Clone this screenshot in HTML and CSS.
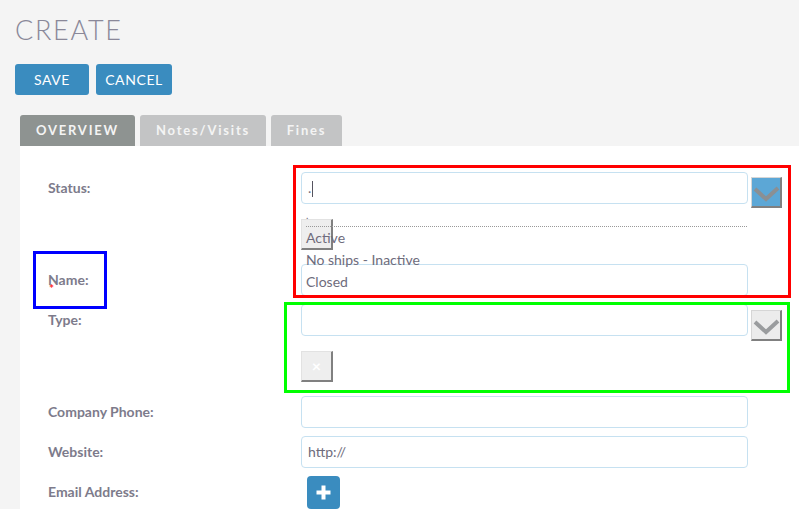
FILE: index.html
```html
<!DOCTYPE html>
<html>
<head>
<meta charset="utf-8">
<link rel="stylesheet" href="styles.css">
</head>
<body>
<div class="page">
  <h1 class="title">CREATE</h1>
  <div class="actions">
    <button class="btn btn-save">SAVE</button>
    <button class="btn btn-cancel">CANCEL</button>
  </div>
  <div class="tabs">
    <span class="tab tab-active">OVERVIEW</span>
    <span class="tab tab-notes">Notes/Visits</span>
    <span class="tab tab-fines">Fines</span>
  </div>
  <div class="panel">
    <div class="form">
      <div class="row">
        <div class="label">Status:</div>
        <div class="field">
          <div class="line">
            <div class="input">.<span class="caret"></span></div>
            <span class="chev chev-blue"><svg viewBox="0 0 28 28" width="28" height="28"><path d="M3 11 L14 21 L26 10" fill="none" stroke="#8b8f93" stroke-width="4" stroke-linejoin="miter"/></svg></span>
          </div>
          <span class="sqbtn"></span>
          <ul class="list">
            <li class="opt opt-first">.</li>
            <li class="opt">Active</li>
            <li class="opt">No ships - Inactive</li>
            <li class="opt">Closed</li>
          </ul>
        </div>
      </div>
      <div class="row">
        <div class="label label-req">Name:<span class="req">*</span></div>
        <div class="field">
          <div class="line"><div class="input"></div></div>
        </div>
      </div>
      <div class="row">
        <div class="label">Type:</div>
        <div class="field">
          <div class="line">
            <div class="input"></div>
            <span class="chev chev-grey"><svg viewBox="0 0 28 28" width="28" height="28"><path d="M3 11 L14 21 L26 10" fill="none" stroke="#9a9c9e" stroke-width="4" stroke-linejoin="miter"/></svg></span>
          </div>
          <span class="sqbtn sqbtn-x">×</span>
        </div>
      </div>
      <div class="row">
        <div class="label">Company Phone:</div>
        <div class="field">
          <div class="line"><div class="input"></div></div>
        </div>
      </div>
      <div class="row">
        <div class="label">Website:</div>
        <div class="field">
          <div class="line"><div class="input">http://</div></div>
        </div>
      </div>
      <div class="row">
        <div class="label">Email Address:</div>
        <div class="field">
          <span class="plus"><svg viewBox="0 0 33 33" width="33" height="33"><path d="M16.5 9.5 V23.5 M9.5 16.5 H23.5" stroke="#ffffff" stroke-width="4"/></svg></span>
        </div>
      </div>
    </div>
  </div>
  <div class="mark mark-red"></div>
  <div class="mark mark-green"></div>
  <div class="mark mark-blue"></div>
</div>
</body>
</html>
```

FILE: styles.css
```css
* { box-sizing: border-box; }
html, body {
  margin: 0;
  padding: 0;
  background: #f4f4f4;
  font-family: Lato, "Open Sans", sans-serif;
  overflow: hidden;
}
.page {
  position: relative;
  display: flex;
  flex-direction: column;
  padding: 16px 0 0 15px;
  height: 509px;
}
.title {
  margin: 0;
  font-weight: 300;
  font-size: 27px;
  line-height: 28px;
  letter-spacing: 1.7px;
  color: #8a8899;
}
.actions {
  display: flex;
  gap: 7px;
  margin-top: 20px;
}
.btn {
  height: 31px;
  border: none;
  border-radius: 3px;
  background: #3a8cbf;
  color: #fff;
  font-family: Lato, sans-serif;
  font-size: 14px;
  letter-spacing: 0.6px;
  padding: 0;
  text-align: center;
  cursor: pointer;
}
.btn-save { width: 74px; }
.btn-cancel { width: 76px; }
.tabs {
  display: flex;
  gap: 5px;
  margin: 20px 0 0 5px;
}
.tab {
  height: 31px;
  line-height: 31px;
  border-radius: 3px 3px 0 0;
  background: #c3c4c5;
  color: #f4f4f4;
  font-weight: 700;
  font-size: 13px;
  letter-spacing: 1.8px;
  text-align: center;
}
.tab-active { background: #8e9391; width: 115px; }
.tab-notes { width: 126px; }
.tab-fines { width: 71px; }
.panel {
  flex: 1;
  min-height: 0;
  overflow: hidden;
  margin-left: 5px;
  background: #fff;
  padding: 26px 0 0 28px;
}
.form {
  display: flex;
  flex-direction: column;
  gap: 8px;
}
.row {
  display: grid;
  grid-template-columns: 253px 1fr;
  align-items: start;
}
.label {
  height: 32px;
  line-height: 32px;
  font-weight: 700;
  font-size: 14px;
  color: #7d7b8b;
}
.label-req { position: relative; }
.req {
  position: absolute;
  left: 1px;
  top: 19px;
  line-height: 1;
  color: #ff2a2a;
  font-size: 12px;
}
.field {
  position: relative;
  display: flex;
  flex-direction: column;
  align-items: flex-start;
}
.line {
  display: flex;
  align-items: flex-start;
  gap: 3px;
  height: 32px;
}
.input {
  width: 447px;
  height: 32px;
  border: 1px solid #c6e1f1;
  border-radius: 4px;
  background: #fff;
  padding: 0 6px;
  line-height: 30px;
  font-size: 14px;
  color: #6e6c7c;
  position: relative;
}
.caret {
  display: inline-block;
  width: 1px;
  height: 16px;
  background: #55535f;
  vertical-align: middle;
  margin-left: 1px;
}
.chev {
  display: block;
  flex: none;
  width: 31px;
  height: 31px;
  margin-top: 5px;
  border-top: 1px solid #d6d6d6;
  border-left: 1px solid #d6d6d6;
  border-right: 2px solid #808080;
  border-bottom: 2px solid #808080;
  overflow: hidden;
}
.chev svg { display: block; }
.chev-blue { background: #5ca7d6; }
.chev-grey { background: #ececec; margin-top: 6px; }
.sqbtn {
  display: block;
  width: 32px;
  height: 31px;
  margin: 15px 0 6px;
  background: #eeeeee;
  border-top: 1px solid #e2e2e2;
  border-left: 1px solid #e2e2e2;
  border-right: 2px solid #808080;
  border-bottom: 2px solid #808080;
}
.sqbtn-x {
  color: #ffffff;
  font-size: 16px;
  font-weight: 700;
  text-align: center;
  line-height: 28px;
}
.list {
  position: absolute;
  left: 5px;
  top: 33px;
  width: 441px;
  margin: 0;
  padding: 0;
  list-style: none;
  z-index: 2;
}
.opt {
  height: 22px;
  line-height: 22px;
  font-size: 14px;
  color: #6e6c7c;
}
.opt-first {
  border-bottom: 1px dotted #999;
  padding-top: 3px;
  line-height: 14px;
  font-size: 10px;
}
.plus {
  display: block;
  width: 33px;
  height: 33px;
  margin-left: 6px;
  border-radius: 4px;
  background: #3a8cbf;
}
.plus svg { display: block; }
.mark {
  position: absolute;
  border: 3px solid;
  pointer-events: none;
  z-index: 5;
}
.mark-red { border-color: #ff0000; left: 293px; top: 165px; width: 498px; height: 133px; }
.mark-green { border-color: #00ff00; left: 284px; top: 302px; width: 506px; height: 91px; }
.mark-blue { border-color: #0000ff; left: 33px; top: 251px; width: 74px; height: 58px; }
```
